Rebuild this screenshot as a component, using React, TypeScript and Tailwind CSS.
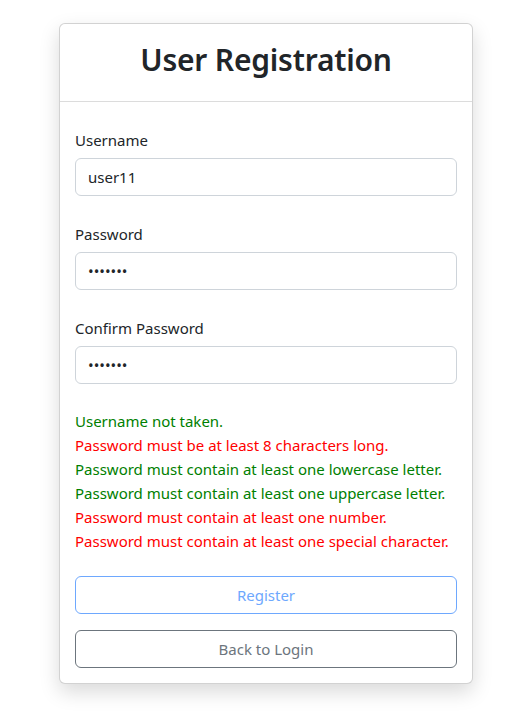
import React from "react";

const font = { fontFamily: '"Noto Sans", "Open Sans", sans-serif' };

export default function App() {
  return (
    <div className="min-h-[718px] w-full bg-white text-[#212529]" style={font}>
      <div className="pt-[23px] pl-[59px]">
        <div className="w-[414px] rounded-[6px] border border-[rgba(0,0,0,0.175)] bg-white shadow-[0_8px_20px_rgba(0,0,0,0.15)]">
          <div className="h-[78px] flex items-center justify-center border-b border-[#dcdcdc]">
            <h2 className="text-[30px] font-semibold leading-none tracking-[-0.2px] text-[#212529] -mt-[5px]">User Registration</h2>
          </div>
          <div className="px-[15px] pb-[15px] pt-[26px] text-[15px]">
            <div className="flex flex-col gap-[26px]">
              <div>
                <label className="block leading-[24px] mb-[6px]">Username</label>
                <input
                  readOnly
                  value="user11"
                  className="block w-full h-[38px] rounded-[6px] border border-[#ced4da] px-[12px] text-[15px] text-[#212529] outline-none"
                />
              </div>
              <div>
                <label className="block leading-[24px] mb-[6px]">Password</label>
                <input
                  readOnly
                  type="password"
                  value="1234567"
                  className="block w-full h-[38px] rounded-[6px] border border-[#ced4da] px-[12px] text-[15px] text-[#212529] outline-none"
                />
              </div>
              <div>
                <label className="block leading-[24px] mb-[6px]">Confirm Password</label>
                <input
                  readOnly
                  type="password"
                  value="1234567"
                  className="block w-full h-[38px] rounded-[6px] border border-[#ced4da] px-[12px] text-[15px] text-[#212529] outline-none"
                />
              </div>
            </div>
            <div className="mt-[25px] leading-[24px]">
              <div className="text-[#008000]">Username not taken.</div>
              <div className="text-[#ff0000]">Password must be at least 8 characters long.</div>
              <div className="text-[#008000]">Password must contain at least one lowercase letter.</div>
              <div className="text-[#008000]">Password must contain at least one uppercase letter.</div>
              <div className="text-[#ff0000]">Password must contain at least one number.</div>
              <div className="text-[#ff0000]">Password must contain at least one special character.</div>
            </div>
            <div className="mt-[23px] flex flex-col gap-[16px]">
              <button
                disabled
                className="h-[38px] w-full rounded-[6px] border border-[#6ea8fe] text-[#6ea8fe] bg-white text-[15px]"
              >
                Register
              </button>
              <button className="h-[38px] w-full rounded-[6px] border border-[#6c757d] text-[#6c757d] bg-white text-[15px]">
                Back to Login
              </button>
            </div>
          </div>
        </div>
      </div>
    </div>
  );
}
